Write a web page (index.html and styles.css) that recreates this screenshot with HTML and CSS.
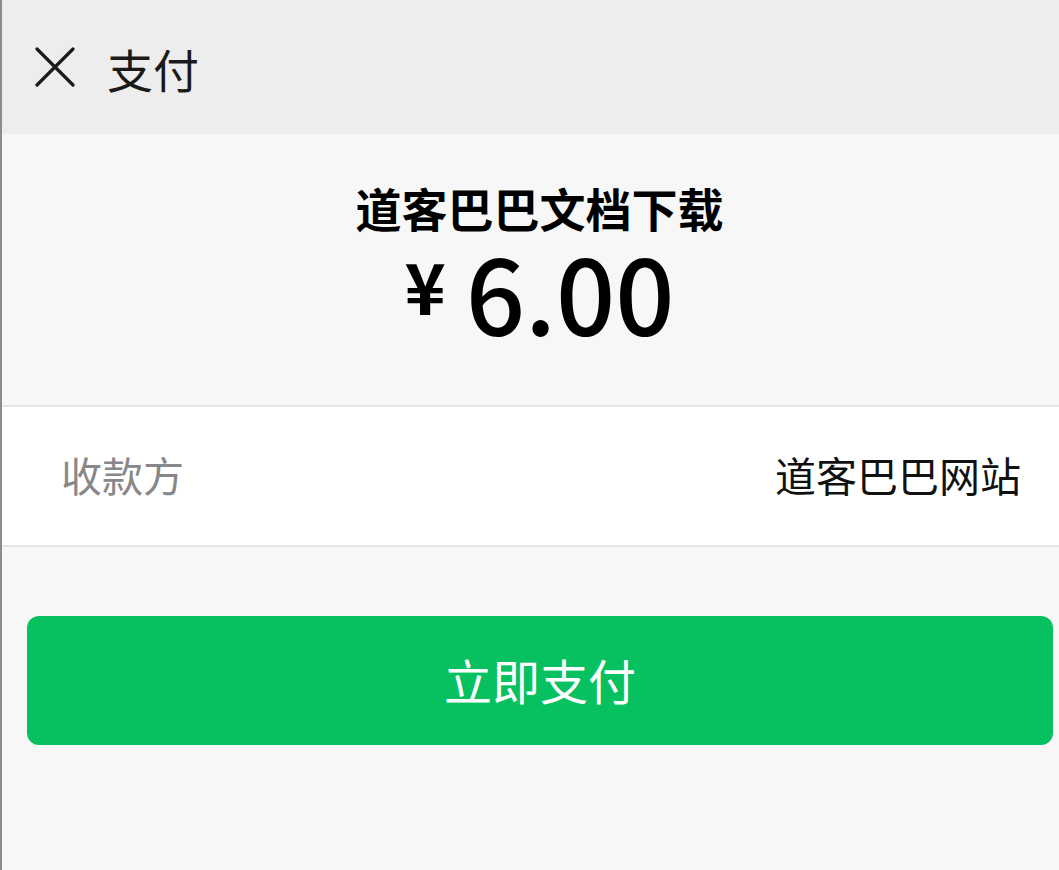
FILE: index.html
```html
<!DOCTYPE html>
<html lang="zh-CN">
<head>
<meta charset="utf-8">
<title>支付</title>
<link rel="stylesheet" href="styles.css">
</head>
<body>
<div class="page">
  <header class="topbar">
    <svg class="close" width="40" height="40" viewBox="0 0 40 40" aria-hidden="true">
      <path d="M2 2 L38 38 M38 2 L2 38" stroke="#1a1a1a" stroke-width="3.2" stroke-linecap="round" fill="none"/>
    </svg>
    <span class="topbar-title">支付</span>
  </header>
  <section class="summary">
    <div class="merchant-title">道客巴巴文档下载</div>
    <div class="price"><span class="currency">¥</span><span class="amount">6.00</span></div>
  </section>
  <div class="row">
    <span class="row-label">收款方</span>
    <span class="row-value">道客巴巴网站</span>
  </div>
  <button class="pay-btn" type="button">立即支付</button>
</div>
</body>
</html>
```
FILE: styles.css
```css
html, body {
  margin: 0;
  padding: 0;
}
body {
  background: #f7f7f7;
  font-family: "Noto Sans CJK SC", "Noto Sans", sans-serif;
  color: #191919;
}
.page {
  height: 870px;
  border-left: 2px solid #8c8c8c;
  box-sizing: border-box;
  display: flex;
  flex-direction: column;
}
.topbar {
  height: 134px;
  background: #ededed;
  display: flex;
  align-items: center;
  padding-left: 33px;
  box-sizing: border-box;
}
.close {
  display: block;
  width: 40px;
  height: 40px;
}
.topbar-title {
  margin-left: 32px;
  font-size: 46px;
  line-height: 1;
  color: #1a1a1a;
  padding-top: 2px;
}
.summary {
  height: 271px;
  display: flex;
  flex-direction: column;
  align-items: center;
  padding: 45px 0 0 18px;
  box-sizing: border-box;
}
.merchant-title {
  font-size: 46px;
  font-weight: 700;
  line-height: 56px;
  color: #000;
}
.price {
  display: flex;
  align-items: flex-start;
  margin-top: 4px;
  color: #000;
}
.currency {
  font-size: 70px;
  font-weight: 700;
  line-height: 70px;
  margin: 11px 20px 0 0;
}
.amount {
  font-size: 104px;
  font-weight: 500;
  line-height: 104px;
}
.row {
  height: 142px;
  box-sizing: border-box;
  background: #fff;
  border-top: 2px solid #e5e5e5;
  border-bottom: 2px solid #e5e5e5;
  display: flex;
  align-items: center;
  justify-content: space-between;
  padding: 0 38px 4px 59px;
  font-size: 41px;
}
.row-label {
  color: #888;
}
.row-value {
  color: #111;
}
.pay-btn {
  margin: 69px 6px 0 25px;
  height: 129px;
  border: none;
  border-radius: 12px;
  background: #07c160;
  color: #fff;
  font-family: "Noto Sans CJK SC", "Noto Sans", sans-serif;
  font-size: 48px;
  padding: 0 0 4px;
  cursor: pointer;
}
```
